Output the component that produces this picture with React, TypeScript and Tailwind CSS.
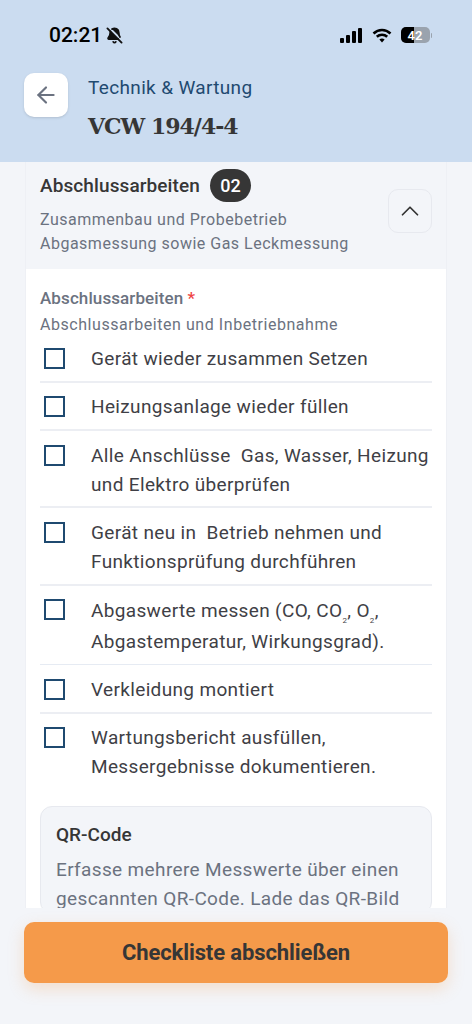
import { ArrowLeft, BellOff, ChevronUp } from "lucide-react";
import type { ReactNode } from "react";

const items: { label: ReactNode; rowClass: string; textClass: string; boxClass: string }[] = [
  {
    label: "Gerät wieder zusammen Setzen",
    rowClass: "h-[48px] border-[#eceef3] border-b-2",
    textClass: "mt-[9px] leading-[29px]",
    boxClass: "mt-[13px]",
  },
  {
    label: "Heizungsanlage wieder füllen",
    rowClass: "h-[48px] border-[#eceef3] border-b-2",
    textClass: "mt-[9px] leading-[29px]",
    boxClass: "mt-[13px]",
  },
  {
    label: (
      <>
        Alle Anschlüsse&nbsp; Gas, Wasser, Heizung
        <br />
        und Elektro überprüfen
      </>
    ),
    rowClass: "h-[77px] border-[#eceef3] border-b-2",
    textClass: "mt-[10px] leading-[29px]",
    boxClass: "mt-[14px]",
  },
  {
    label: (
      <>
        Gerät neu in&nbsp; Betrieb nehmen und
        <br />
        Funktionsprüfung durchführen
      </>
    ),
    rowClass: "h-[78px] border-[#eceef3] border-b-2",
    textClass: "mt-[10px] leading-[29px]",
    boxClass: "mt-[14px]",
  },
  {
    label: (
      <>
        Abgaswerte messen (CO, CO<sub className="-bottom-[6px] text-[8px]">2</sub>, O<sub className="-bottom-[6px] text-[8px]">2</sub>,
        <br />
        Abgastemperatur, Wirkungsgrad).
      </>
    ),
    rowClass: "h-[79px] border-[#e6ebf3] border-b",
    textClass: "mt-[9px] leading-[31px]",
    boxClass: "mt-[13px]",
  },
  {
    label: "Verkleidung montiert",
    rowClass: "h-[49px] border-[#eceef3] border-b-2",
    textClass: "mt-[10px] leading-[29px]",
    boxClass: "mt-[14px]",
  },
  {
    label: (
      <>
        Wartungsbericht ausfüllen,
        <br />
        Messergebnisse dokumentieren.
      </>
    ),
    rowClass: "",
    textClass: "mt-[9px] leading-[29px]",
    boxClass: "mt-[13px]",
  },
];

const StatusBar = () => (
  <div className="flex h-[70px] items-start justify-between pt-[22px] pr-[40px] pl-[49px]">
    <div className="flex items-center gap-[4px]">
      <span className="text-[21px] leading-[26px] font-medium text-black">02:21</span>
      <BellOff size={17} strokeWidth={2.6} className="text-[#111]" fill="#111" />
    </div>
    <div className="mt-[5px] flex items-center gap-[9px]">
      <svg width="24" height="16" viewBox="0 0 24 16" fill="#000">
        <rect x="1" y="11" width="4" height="5" rx="1" />
        <rect x="7" y="8" width="4" height="8" rx="1" />
        <rect x="13" y="4" width="4" height="12" rx="1" />
        <rect x="19" y="1" width="4" height="15" rx="1" />
      </svg>
      <svg width="20" height="15" viewBox="0 0 20 15" fill="none" stroke="#000" strokeWidth="2.6">
        <path d="M1.5 5.5C6.5 .8 13.5 .8 18.5 5.5" />
        <path d="M4.8 8.8C7.8 6 12.2 6 15.2 8.8" />
        <path d="M10 14.5l-2.6-3c1.5-1.2 3.7-1.2 5.2 0z" fill="#000" stroke="none" />
      </svg>
      <div className="flex items-center">
        <div className="relative flex h-[16px] w-[29px] items-center justify-center overflow-hidden rounded-[5px] bg-[#9aa3ae]">
          <div className="absolute top-0 bottom-0 left-0 w-[13px] bg-black" />
          <span className="relative text-[13px] leading-none font-semibold text-white">42</span>
        </div>
        <div className="ml-[1px] h-[5px] w-[1.5px] rounded-r bg-[#9aa3ae]" />
      </div>
    </div>
  </div>
);

export default function App() {
  return (
    <div className="flex h-[1024px] w-[472px] flex-col overflow-hidden bg-[#f3f5f9] font-['Roboto',sans-serif]">
      <header className="h-[162px] shrink-0 bg-[#cbdcf0]">
        <StatusBar />
        <div className="flex gap-[20px] pl-[24px]">
          <button className="mt-[3px] flex h-[44px] w-[44px] items-center justify-center rounded-[10px] bg-white shadow-sm">
            <ArrowLeft size={26} strokeWidth={2} className="text-[#6b7280]" />
          </button>
          <div>
            <div className="text-[19px] leading-[36px] tracking-[0.35px] text-[#1f4a70]">Technik &amp; Wartung</div>
            <div className="mt-[2px] font-['DejaVu_Serif',serif] text-[22px] leading-[36px] font-bold tracking-[-1px] text-[#363636]">
              VCW 194/4-4
            </div>
          </div>
        </div>
      </header>

      <main className="mx-[25px] h-[746px] shrink-0 overflow-hidden border-x border-[#eef0f5] bg-white">
        <section className="flex h-[107px] items-start justify-between bg-[#f3f5f9] px-[14px] pt-[7px]">
          <div>
            <div className="flex items-center gap-[10px]">
              <span className="text-[19px] leading-[32px] font-medium tracking-[0.1px] text-[#363636]">Abschlussarbeiten</span>
              <span className="flex h-[33px] w-[41px] items-center justify-center rounded-full bg-[#363636] text-[18px] font-medium text-white">
                02
              </span>
            </div>
            <p className="mt-[6px] text-[16px] leading-[24px] tracking-[0.5px] text-[#6b7280]">
              Zusammenbau und Probebetrieb
              <br />
              Abgasmessung sowie Gas Leckmessung
            </p>
          </div>
          <button className="mt-[20px] flex h-[44px] w-[44px] items-center justify-center rounded-[10px] border border-[#e7e9ef]">
            <ChevronUp size={30} strokeWidth={1.4} className="text-[#333]" />
          </button>
        </section>

        <section className="px-[14px] pt-[17px]">
          <div className="text-[17px] leading-[24px] font-medium tracking-[0.1px] text-[#6b7280]">
            Abschlussarbeiten <span className="text-[#ef4444]">*</span>
          </div>
          <div className="mt-[5px] text-[16px] leading-[20px] tracking-[0.55px] text-[#6b7280]">
            Abschlussarbeiten und Inbetriebnahme
          </div>

          <div>
            {items.map((item, i) => (
              <div key={i} className={`flex ${item.rowClass}`}>
                <div className={`ml-[4px] h-[21px] w-[21px] shrink-0 border-2 border-[#1f4a70] ${item.boxClass}`} />
                <div className={`ml-[26px] text-[19px] tracking-[0.35px] whitespace-nowrap text-[#3f3f46] ${item.textClass}`}>
                  {item.label}
                </div>
              </div>
            ))}
          </div>

          <div className="mt-[25px] rounded-[12px] border border-[#e7e9ef] bg-[#f3f5f9] px-[15px] pt-[14px]">
            <div className="text-[19px] leading-[28px] font-medium text-[#363636]">QR-Code</div>
            <p className="mt-[6px] text-[19px] leading-[29px] tracking-[0.36px] text-[#6b7280]">
              Erfasse mehrere Messwerte über einen gescannten QR-Code. Lade das QR-Bild
            </p>
          </div>
        </section>
      </main>

      <footer className="flex-1 px-[24px] pt-[14px]">
        <button className="h-[61px] w-full rounded-[10px] bg-[#f59a4a] text-[22px] font-bold tracking-[-0.1px] text-[#363636] shadow-[0_6px_16px_rgba(245,154,74,0.25)]">
          Checkliste abschließen
        </button>
      </footer>
    </div>
  );
}
